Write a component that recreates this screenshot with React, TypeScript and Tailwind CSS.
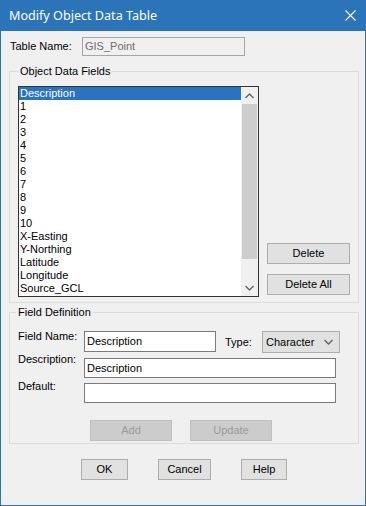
const items = [
  'Description', '1', '2', '3', '4', '5', '6', '7', '8', '9', '10',
  'X-Easting', 'Y-Northing', 'Latitude', 'Longitude', 'Source_GCL',
];

function Btn({ label, w, disabled = false }: { label: string; w: string; disabled?: boolean }) {
  return (
    <button
      className={`${w} h-[21px] border flex items-center justify-center ${
        disabled ? 'bg-[#cccccc] border-[#bfbfbf] text-[#9a9a9a]' : 'bg-[#e1e1e1] border-[#adadad] text-black'
      }`}
    >
      {label}
    </button>
  );
}

function Chevron({ up = false }: { up?: boolean }) {
  return (
    <svg width="9" height="6" viewBox="0 0 9 6" className="block">
      <polyline
        points={up ? '0.5,5 4.5,1 8.5,5' : '0.5,1 4.5,5 8.5,1'}
        fill="none"
        stroke="#606060"
        strokeWidth="1.3"
      />
    </svg>
  );
}

export default function App() {
  return (
    <div className="w-[366px] h-[506px] flex flex-col bg-[#2b74b9] font-['Liberation_Sans',Arial,sans-serif] text-[11px] leading-[13px] text-black">
      {/* Title bar */}
      <div className="h-[31px] flex items-center justify-between pl-[9px] pr-[10px] text-white">
        <span className="font-['Noto_Sans',sans-serif] text-[12.6px] leading-[16px]">Modify Object Data Table</span>
        <svg width="11" height="11" viewBox="0 0 11 11">
          <line x1="0.5" y1="0.5" x2="10.5" y2="10.5" stroke="white" strokeWidth="1.1" />
          <line x1="10.5" y1="0.5" x2="0.5" y2="10.5" stroke="white" strokeWidth="1.1" />
        </svg>
      </div>

      <div className="flex-1 mx-[1px] mb-[1px] bg-[#f0f0f0] flex flex-col">
        {/* Table name */}
        <div className="mt-[6px] ml-[9px] flex items-center">
          <span className="w-[72px]">Table Name:</span>
          <div className="w-[163px] h-[19px] border border-[#a6a6a6] bg-[#f0f0f0] text-[#6d6d6d] pl-[2px] flex items-center">
            GIS_Point
          </div>
        </div>

        {/* Object Data Fields */}
        <fieldset className="mt-[9px] ml-[8px] w-[350px] border border-[#dcdcdc]">
          <legend className="ml-[8px] px-[2px]">Object Data Fields</legend>
          <div className="pt-[8px] pl-[8px] pb-[5px] flex gap-[8px]">
            <div className="w-[241px] h-[211px] border border-[#333] bg-white flex">
              <div className="flex-1 flex flex-col">
                {items.map((it, i) => (
                  <div
                    key={it}
                    className={`h-[13px] pl-[1px] leading-[13px] ${i === 0 ? 'bg-[#2a73c0] text-white' : ''}`}
                  >
                    {it}
                  </div>
                ))}
              </div>
              <div className="w-[17px] bg-[#f0f0f0] flex flex-col">
                <div className="h-[17px] flex items-center justify-center"><Chevron up /></div>
                <div className="h-[155px] mx-[1px] bg-[#cdcdcd]" />
                <div className="flex-1" />
                <div className="h-[17px] flex items-center justify-center"><Chevron /></div>
              </div>
            </div>
            <div className="flex flex-col justify-end gap-[10px] pb-[2px]">
              <Btn label="Delete" w="w-[83px]" />
              <Btn label="Delete All" w="w-[83px]" />
            </div>
          </div>
        </fieldset>

        {/* Field Definition */}
        <fieldset className="mt-[3px] ml-[8px] w-[350px] border border-[#dcdcdc]">
          <legend className="ml-[6px] px-[2px]">Field Definition</legend>
          <div className="pl-[8px] pt-[12px] pb-[2px] flex flex-col">
            <div className="flex items-start">
              <span className="w-[66px] -mt-[1px]">Field Name:</span>
              <div className="w-[132px] h-[21px] border border-[#7a7a7a] bg-white pl-[2px] flex items-center">
                Description
              </div>
              <span className="ml-[9px] w-[37px] self-center">Type:</span>
              <div className="w-[78px] h-[22px] border border-[#adadad] bg-[#e1e1e1] pl-[3px] pr-[6px] flex items-center justify-between">
                <span>Character</span>
                <Chevron />
              </div>
            </div>
            <div className="mt-[5px] flex items-start">
              <span className="w-[66px] -mt-[5px]">Description:</span>
              <div className="w-[252px] h-[20px] border border-[#7a7a7a] bg-white pl-[2px] flex items-center">
                Description
              </div>
            </div>
            <div className="mt-[5px] flex items-start">
              <span className="w-[66px] -mt-[3px]">Default:</span>
              <div className="w-[252px] h-[20px] border border-[#7a7a7a] bg-white" />
            </div>
            <div className="mt-[17px] ml-[72px] flex gap-[18px]">
              <Btn label="Add" w="w-[82px]" disabled />
              <Btn label="Update" w="w-[82px]" disabled />
            </div>
          </div>
        </fieldset>

        {/* Dialog buttons */}
        <div className="mt-[15px] ml-[80px] flex gap-[30px]">
          <Btn label="OK" w="w-[47px]" />
          <Btn label="Cancel" w="w-[53px]" />
          <Btn label="Help" w="w-[46px]" />
        </div>
      </div>
    </div>
  );
}
